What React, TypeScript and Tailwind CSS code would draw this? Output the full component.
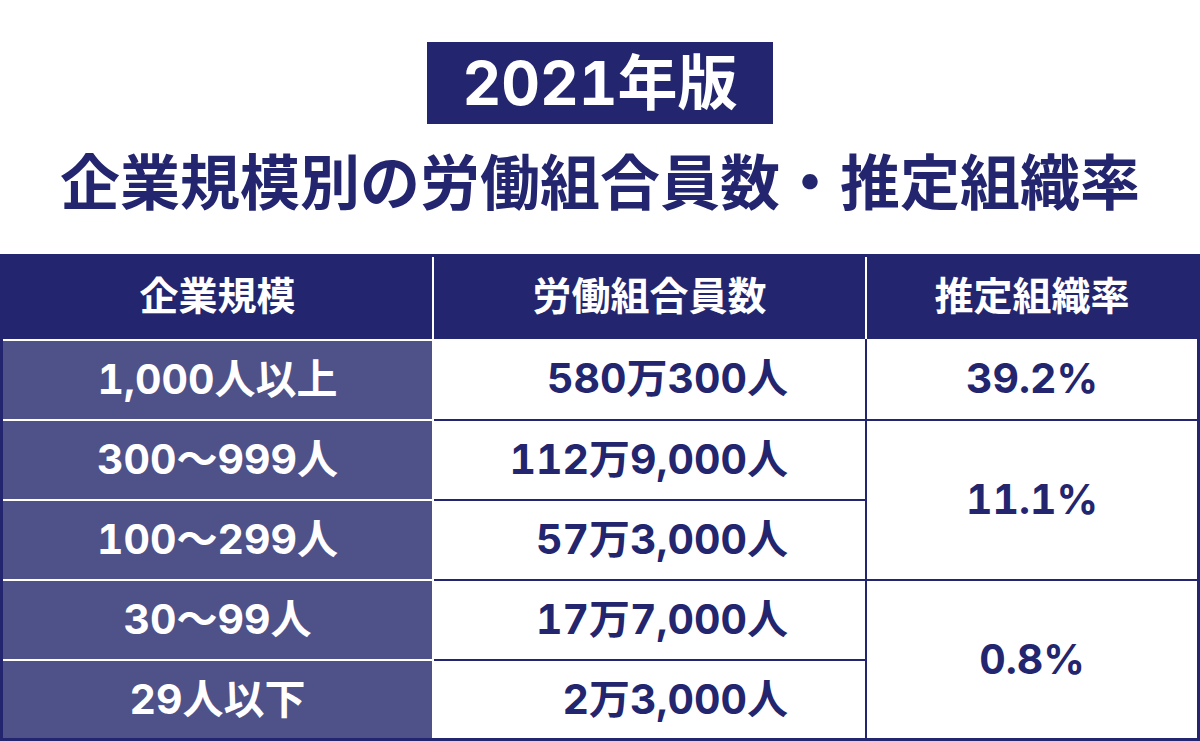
const font = { fontFamily: 'Inter, "Noto Sans CJK JP", sans-serif' };

const sizes = ["1,000人以上", "300〜999人", "100〜299人", "30〜99人", "29人以下"];
const members = ["580万300人", "112万9,000人", "57万3,000人", "17万7,000人", "2万3,000人"];

export default function App() {
  return (
    <div className="w-[1200px] h-[741px] bg-white overflow-hidden tabular-nums" style={font}>
      <div className="flex justify-center pt-[42px]">
        <div className="flex h-[82px] w-[346px] items-center justify-center bg-[#23266e] text-[60px] font-bold leading-none text-white">
          2021年版
        </div>
      </div>
      <h1 className="mt-[29px] h-[60px] text-center text-[60px] font-bold leading-[60px] text-[#23266e]">
        企業規模別の労働組合員数・推定組織率
      </h1>

      <div className="mt-[41px] bg-[#23266e] px-[3px] pb-[3px]">
        {/* header */}
        <div className="flex h-[85px] text-[39px] font-bold text-white">
          <div className="flex w-[429px] items-center justify-center">企業規模</div>
          <div className="mt-[3px] w-[2px] bg-white" />
          <div className="flex w-[431px] items-center justify-center">労働組合員数</div>
          <div className="mt-[3px] w-[2px] bg-white" />
          <div className="flex w-[330px] items-center justify-center">推定組織率</div>
        </div>

        {/* body */}
        <div className="flex h-[399px] text-[41px] font-bold">
          <div className="flex w-[429px] flex-col gap-[2px] bg-white pt-[2px]">
            {sizes.map((s, i) => (
              <div
                key={s}
                className={`flex items-center justify-center bg-[#4f5189] text-white ${i === 4 ? "h-[77px]" : "h-[78px]"}`}
              >
                {s}
              </div>
            ))}
          </div>
          <div className="w-[2px] bg-white" />
          <div className="flex w-[431px] flex-col gap-[2px]">
            {members.map((m, i) => (
              <div
                key={m}
                className={`flex items-center justify-end bg-white pr-[77px] text-[#23266e] ${i === 0 ? "h-[80px]" : i === 4 ? "h-[77px]" : "h-[78px]"}`}
              >
                {m}
              </div>
            ))}
          </div>
          <div className="w-[2px]" />
          <div className="flex w-[330px] flex-col gap-[2px] text-[#23266e]">
            <div className="flex h-[80px] items-center justify-center bg-white">39.2%</div>
            <div className="flex h-[158px] items-center justify-center bg-white">11.1%</div>
            <div className="flex h-[157px] items-center justify-center bg-white">0.8%</div>
          </div>
        </div>
      </div>
    </div>
  );
}
